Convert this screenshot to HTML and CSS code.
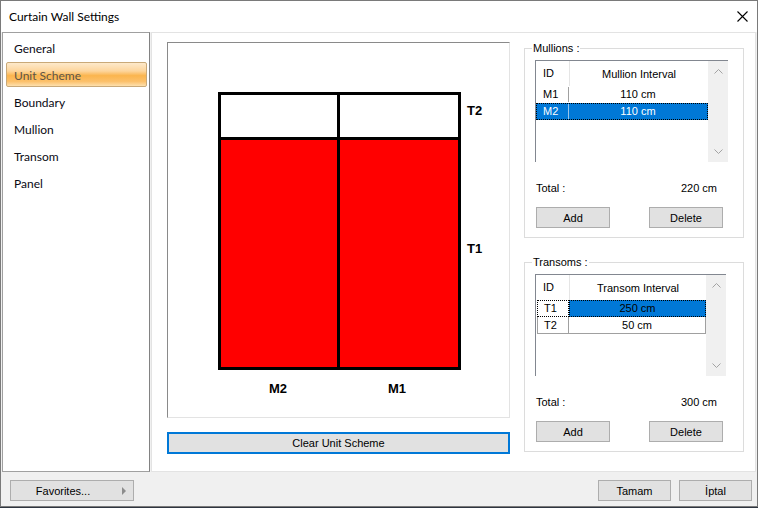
FILE: index.html
```html
<!DOCTYPE html>
<html lang="en">
<head>
  <meta charset="UTF-8">
  <title>Curtain Wall Settings</title>
  <link rel="stylesheet" href="styles.css">
</head>
<body>

<div class="window">
  <div class="titlebar">
    <span class="title">Curtain Wall Settings</span>
    <svg class="close" width="11" height="11" viewBox="0 0 11 11">
      <path d="M0.5 0.5 L10.5 10.5 M10.5 0.5 L0.5 10.5" stroke="#000" stroke-width="1.1" fill="none"/>
    </svg>
  </div>

  <div class="main">
    <ul class="nav">
      <li>General</li>
      <li class="selected">Unit Scheme</li>
      <li>Boundary</li>
      <li>Mullion</li>
      <li>Transom</li>
      <li>Panel</li>
    </ul>

    <div class="content">
      <div class="scheme-col">
        <div class="canvas">
          <svg width="341" height="374" viewBox="0 0 341 374">
            <rect x="51.5" y="95.5" width="240" height="230" fill="#ff0000"/>
            <rect x="51.5" y="50.5" width="240" height="275" fill="none" stroke="#000" stroke-width="3"/>
            <line x1="51.5" y1="95.5" x2="291.5" y2="95.5" stroke="#000" stroke-width="3"/>
            <line x1="170.5" y1="50.5" x2="170.5" y2="325.5" stroke="#000" stroke-width="3"/>
            <g class="dim-label">
              <text x="299" y="72">T2</text>
              <text x="299" y="210">T1</text>
              <text x="110" y="350" text-anchor="middle">M2</text>
              <text x="229" y="350" text-anchor="middle">M1</text>
            </g>
          </svg>
        </div>
        <button class="clear-btn">Clear Unit Scheme</button>
      </div>

      <div class="groups-col">
        <div class="group">
          <span class="legend">Mullions :</span>
          <div class="listview">
            <div class="lv-table">
              <div class="lv-head"><span class="c-id">ID</span><span class="c-val">Mullion Interval</span></div>
              <div class="lv-row"><span class="c-id">M1</span><span class="c-val">110 cm</span></div>
              <div class="lv-row selected"><span class="c-id">M2</span><span class="c-val">110 cm</span></div>
            </div>
            <div class="scrollbar">
              <svg width="9" height="5" viewBox="0 0 9 5"><path d="M0.5 4.5 L4.5 0.5 L8.5 4.5" stroke="#a3a3a3" fill="none"/></svg>
              <svg width="9" height="5" viewBox="0 0 9 5"><path d="M0.5 0.5 L4.5 4.5 L8.5 0.5" stroke="#a3a3a3" fill="none"/></svg>
            </div>
          </div>
          <div class="total"><span>Total :</span><span>220 cm</span></div>
          <div class="group-buttons"><button class="btn">Add</button><button class="btn">Delete</button></div>
        </div>

        <div class="group">
          <span class="legend">Transoms :</span>
          <div class="listview narrow">
            <div class="lv-table">
              <div class="lv-head"><span class="c-id">ID</span><span class="c-val">Transom Interval</span></div>
              <div class="lv-row grid focused"><span class="c-id">T1</span><span class="c-val">250 cm</span></div>
              <div class="lv-row grid"><span class="c-id">T2</span><span class="c-val">50 cm</span></div>
            </div>
            <div class="scrollbar">
              <svg width="9" height="5" viewBox="0 0 9 5"><path d="M0.5 4.5 L4.5 0.5 L8.5 4.5" stroke="#a3a3a3" fill="none"/></svg>
              <svg width="9" height="5" viewBox="0 0 9 5"><path d="M0.5 0.5 L4.5 4.5 L8.5 0.5" stroke="#a3a3a3" fill="none"/></svg>
            </div>
          </div>
          <div class="total"><span>Total :</span><span>300 cm</span></div>
          <div class="group-buttons"><button class="btn">Add</button><button class="btn">Delete</button></div>
        </div>
      </div>
    </div>
  </div>

  <div class="footer">
    <button class="btn favorites">Favorites...</button>
    <button class="btn ok">Tamam</button>
    <button class="btn">İptal</button>
  </div>
</div>

</body>
</html>
```

FILE: styles.css
```css
* {
  box-sizing: border-box;
}

body {
  margin: 0;
  background-color: #2e3540;
  font-family: "Liberation Sans", Arial, sans-serif;
  font-size: 11px;
  color: #000;
}

.window {
  width: 758px;
  height: 507px;
  border: 1px solid #7a7a7a;
  background-color: #f0f0f0;
  display: flex;
  flex-direction: column;
}

.titlebar {
  height: 31px;
  flex: none;
  background-color: #fff;
  display: flex;
  align-items: center;
  justify-content: space-between;
  padding: 0 9px 0 8px;
}

.title {
  font-family: Lato, "Noto Sans", sans-serif;
  font-size: 12px;
}

.close {
  display: block;
}

.main {
  height: 440px;
  flex: none;
  display: flex;
  gap: 1px;
  padding: 0 1px;
}

/* left navigation list */
.nav {
  width: 148px;
  margin: 0;
  padding: 2px 2px 0 3px;
  list-style: none;
  background-color: #fff;
  border: 1px solid #a0a0a0;
  border-right-color: #828282;
}

.nav li {
  height: 25px;
  line-height: 21px;
  margin-bottom: 2px;
  padding: 2px 0 0 7px;
  border: 1px solid transparent;
  border-radius: 2px;
  font-family: Lato, "Noto Sans", sans-serif;
  font-size: 12px;
  color: #0a0a14;
}

.nav li.selected {
  border-color: #c9a978;
  color: #5e5446;
  background: linear-gradient(#fde9cb 0%, #fdd59c 35%, #fbb54e 55%, #fcc06a 80%, #fde0ae 100%);
}

.content {
  flex: 1;
  display: flex;
  gap: 14px;
  padding: 9px 0 0 15px;
  background-color: #fff;
  border: 1px solid #e3e3e3;
}

.scheme-col {
  width: 343px;
  display: flex;
  flex-direction: column;
  gap: 14px;
}

.canvas {
  height: 376px;
  background-color: #fff;
  border: 1px solid #e3e3e3;
  border-top-color: #8a8a8a;
  border-left-color: #8a8a8a;
}

.canvas svg {
  display: block;
}

.dim-label text {
  font-family: "Liberation Sans", Arial, sans-serif;
  font-size: 13px;
  font-weight: bold;
  fill: #000;
}

.btn,
.clear-btn {
  font-family: "Liberation Sans", Arial, sans-serif;
  font-size: 11px;
  color: #000;
  background-color: #e1e1e1;
  border: 1px solid #adadad;
  padding: 0;
  height: 21px;
}

.clear-btn {
  height: 22px;
  border: 2px solid #0078d7;
}

/* right side group boxes */
.groups-col {
  width: 220px;
  margin-top: 6px;
  display: flex;
  flex-direction: column;
  gap: 24px;
}

.group {
  position: relative;
  height: 190px;
  border: 1px solid #dcdcdc;
  padding: 11px 0 0 10px;
}

.legend {
  position: absolute;
  left: 7px;
  top: -8px;
  padding: 0 1px;
  line-height: 14px;
  background-color: #fff;
}

.listview {
  width: 193px;
  height: 102px;
  display: flex;
  border-top: 1px solid #828790;
  border-left: 1px solid #828790;
}

.listview.narrow {
  width: 191px;
}

.lv-table {
  flex: 1;
}

.lv-head {
  height: 25px;
  display: flex;
  align-items: center;
}

.lv-head .c-id {
  width: 34px;
  height: 100%;
  line-height: 25px;
  border-right: 1px solid #e5e5e5;
}

.c-id {
  width: 33px;
  padding-left: 7px;
}

.c-val {
  flex: 1;
  text-align: center;
}

.lv-row {
  height: 17px;
  line-height: 15px;
  display: flex;
  border: 1px solid transparent;
}

.lv-row .c-id {
  width: 32px;
  padding-left: 6px;
  border-right: 1px solid #a0a0a0;
}

.lv-row.selected {
  background-color: #0078d7;
  color: #fff;
  border: 1px dotted #000;
}

.lv-row.selected .c-id {
  border-right-color: #9cc5ea;
}

.lv-row.grid {
  border: none;
  margin-left: 1px;
}

.lv-row.grid .c-id,
.lv-row.grid .c-val {
  line-height: 16px;
  border: 1px solid #a0a0a0;
  border-top: none;
}

.lv-row.grid .c-val {
  border-left: none;
}

.lv-row.focused .c-id,
.lv-row.focused .c-val {
  border: 1px dotted #000;
  line-height: 15px;
}

.lv-row.focused .c-val {
  background-color: #0078d7;
}

.scrollbar {
  width: 20px;
  flex: none;
  background-color: #f0f0f0;
  display: flex;
  flex-direction: column;
  justify-content: space-between;
  align-items: center;
  padding: 8px 0 8px;
}

.scrollbar svg {
  display: block;
}

.total {
  width: 182px;
  margin-top: 19px;
  padding-left: 1px;
  line-height: 14px;
  display: flex;
  justify-content: space-between;
}

.group-buttons {
  width: 188px;
  margin-top: 12px;
  padding-left: 1px;
  display: flex;
  justify-content: space-between;
}

.group-buttons .btn {
  width: 74px;
}

/* bottom button strip */
.footer {
  flex: 1;
  display: flex;
  gap: 8px;
  padding: 8px 5px 0 9px;
}

.favorites {
  position: relative;
  width: 124px;
  padding-right: 18px;
}

.favorites::after {
  content: '';
  position: absolute;
  right: 7px;
  top: 6px;
  border-left: 4px solid #8c8c8c;
  border-top: 4px solid transparent;
  border-bottom: 4px solid transparent;
}

.footer .btn:not(.favorites) {
  width: 73px;
}

.footer .ok {
  margin-left: auto;
}
```
